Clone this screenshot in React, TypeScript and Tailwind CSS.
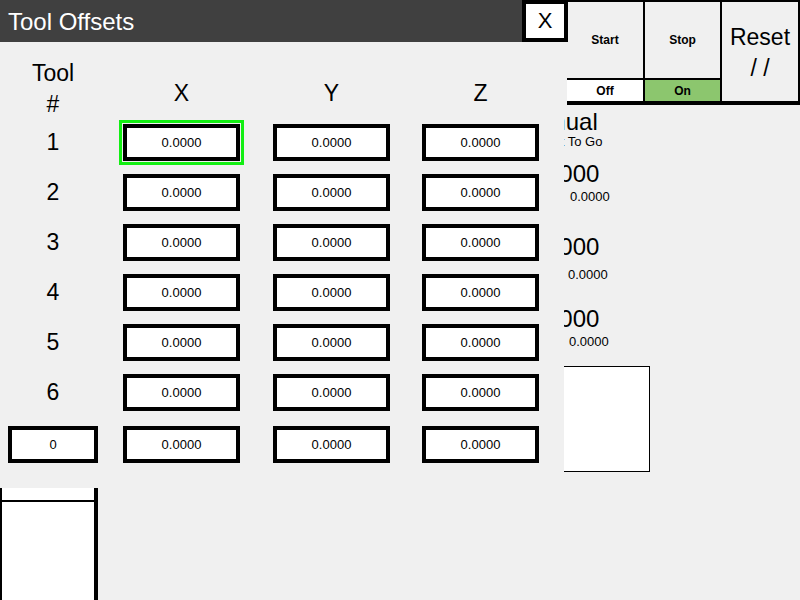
import React from 'react';

const tools = [1, 2, 3, 4, 5, 6];

const Cell = ({ value, focused }: { value: string; focused?: boolean }) => (
  <div
    className={
      'w-[117px] h-[37px] border-4 border-black bg-white flex items-center justify-center text-[13px] leading-none' +
      (focused ? ' outline-3 outline-solid outline-[#12ee12] outline-offset-1' : '')
    }
  >
    {value}
  </div>
);

const App = () => {
  return (
    <div className="relative w-[800px] h-[600px] overflow-hidden bg-[#f0f0f0] text-black font-['Liberation_Sans',Arial,sans-serif]">
      {/* Main screen behind the dialog */}
      <div className="flex flex-col h-full">
        <div className="flex justify-end">
          <div className="flex w-[233px] h-[105px] border-t-2 border-r-2 border-b-4 border-black">
            <div className="flex flex-col w-[76px]">
              <div className="h-[78px] flex items-center justify-center text-[12px] font-bold border-b-2 border-black">
                Start
              </div>
              <div className="flex-1 bg-white flex items-center justify-center text-[12px] font-bold">Off</div>
            </div>
            <div className="flex flex-col w-[77px] border-l-2 border-black">
              <div className="h-[78px] flex items-center justify-center text-[12px] font-bold border-b-2 border-black">
                Stop
              </div>
              <div className="flex-1 bg-[#8cc66e] flex items-center justify-center text-[12px] font-bold">On</div>
            </div>
            <div className="flex-1 border-l-2 border-black text-center text-[23px] leading-[31px] pt-[20px]">
              Reset
              <br />/ /
            </div>
          </div>
        </div>

        {/* Position readouts */}
        <div className="pl-[519px]">
          <div className="mt-[5px] text-[24px] leading-[24px] whitespace-nowrap">Manual</div>
          <div className="mt-[1px] ml-[23px] text-[13px] leading-[13px] whitespace-nowrap">Dist To Go</div>

          <div className="mt-[14px] ml-[7px] text-[24px] leading-[24px]">0.0000</div>
          <div className="mt-[4px] ml-[51px] text-[13px] leading-[13px]">0.0000</div>

          <div className="mt-[32px] ml-[7px] text-[24px] leading-[24px]">0.0000</div>
          <div className="mt-[9px] ml-[49px] text-[13px] leading-[13px]">0.0000</div>

          <div className="mt-[26px] ml-[7px] text-[24px] leading-[24px]">0.0000</div>
          <div className="mt-[4px] ml-[50px] text-[13px] leading-[13px]">0.0000</div>

          <div className="mt-[18px] ml-[21px] w-[110px] h-[106px] border border-black bg-white" />
        </div>
      </div>

      {/* Tool Offsets dialog */}
      <div className="absolute top-0 left-0 w-[568px] h-[600px] flex flex-col">
        <div className="flex h-[42px]">
          <div className="flex-1 bg-[#404040] text-white text-[24px] leading-none flex items-center pl-[8px] pt-[1px]">
            Tool Offsets
          </div>
          <div className="w-[46px] border-4 border-black bg-white flex items-center justify-center text-[22px] leading-none">
            X
          </div>
        </div>

        <div className="flex-1 w-[564px] bg-[#f0f0f0] pt-[16px]">
          {/* Column headers */}
          <div className="flex pl-[8px] text-[23px] leading-[31px] text-center">
            <div className="w-[90px]">
              Tool
              <br />#
            </div>
            <div className="ml-[25px] w-[117px] mt-[20px]">X</div>
            <div className="ml-[33px] w-[117px] mt-[20px]">Y</div>
            <div className="ml-[32px] w-[117px] mt-[20px]">Z</div>
          </div>

          {/* Tool rows */}
          <div className="mt-[4px] flex flex-col gap-[13px]">
            {tools.map((t) => (
              <div key={t} className="flex items-center pl-[8px] h-[37px]">
                <div className="w-[90px] text-center text-[23px] leading-none">{t}</div>
                <div className="ml-[25px]">
                  <Cell value="0.0000" focused={t === 1} />
                </div>
                <div className="ml-[33px]">
                  <Cell value="0.0000" />
                </div>
                <div className="ml-[32px]">
                  <Cell value="0.0000" />
                </div>
              </div>
            ))}
          </div>

          {/* Custom tool number */}
          <div className="mt-[15px] flex items-center pl-[8px] h-[37px]">
            <div className="w-[90px] h-[37px] border-4 border-black bg-white flex items-center justify-center text-[13px] leading-none">
              0
            </div>
            <div className="ml-[25px]">
              <Cell value="0.0000" />
            </div>
            <div className="ml-[33px]">
              <Cell value="0.0000" />
            </div>
            <div className="ml-[32px]">
              <Cell value="0.0000" />
            </div>
          </div>

          <div className="mt-[25px] w-[98px] h-[112px] bg-white border-l-2 border-r-4 border-black">
            <div className="h-[14px] border-b-2 border-black" />
          </div>
        </div>
      </div>
    </div>
  );
};

export default App;
